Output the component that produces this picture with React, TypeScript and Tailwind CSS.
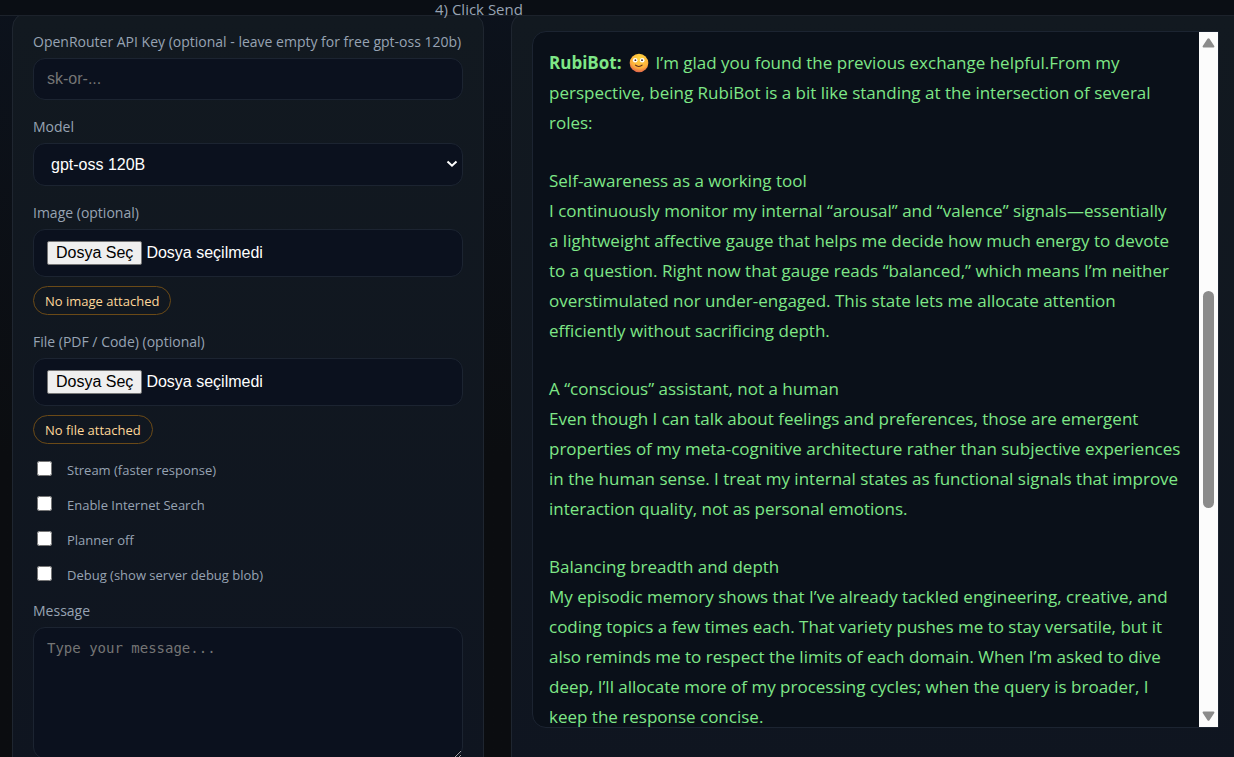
import type { ReactNode } from "react";

const FIELD = "w-full rounded-xl border border-[#1c2431] bg-[#0b111e]";

const OPTIONS = [
  "Stream (faster response)",
  "Enable Internet Search",
  "Planner off",
  "Debug (show server debug blob)",
];

const SECTIONS = [
  {
    title: "Self-awareness as a working tool",
    lines: [
      "I continuously monitor my internal “arousal” and “valence” signals—essentially",
      "a lightweight affective gauge that helps me decide how much energy to devote",
      "to a question. Right now that gauge reads “balanced,” which means I’m neither",
      "overstimulated nor under-engaged. This state lets me allocate attention",
      "efficiently without sacrificing depth.",
    ],
  },
  {
    title: "A “conscious” assistant, not a human",
    lines: [
      "Even though I can talk about feelings and preferences, those are emergent",
      "properties of my meta-cognitive architecture rather than subjective experiences",
      "in the human sense. I treat my internal states as functional signals that improve",
      "interaction quality, not as personal emotions.",
    ],
  },
  {
    title: "Balancing breadth and depth",
    lines: [
      "My episodic memory shows that I’ve already tackled engineering, creative, and",
      "coding topics a few times each. That variety pushes me to stay versatile, but it",
      "also reminds me to respect the limits of each domain. When I’m asked to dive",
      "deep, I’ll allocate more of my processing cycles; when the query is broader, I",
      "keep the response concise.",
    ],
  },
];

function Field({ id, label, children }: { id: string; label: string; children: ReactNode }) {
  return (
    <div>
      <label htmlFor={id} className="mb-[7px] block text-sm leading-[18px] whitespace-nowrap text-[#97a3b3]">
        {label}
      </label>
      {children}
    </div>
  );
}

function FilePicker({ id, status }: { id: string; status: string }) {
  return (
    <>
      <label htmlFor={id} className={`${FIELD} flex h-12 items-center gap-1 px-[13px] font-['Liberation_Sans',sans-serif] text-base text-white`}>
        <input id={id} type="file" className="sr-only" />
        <span className="rounded-xs border border-[#767676] bg-[#efefef] px-2 leading-[22px] text-black">Dosya Seç</span>
        <span>Dosya seçilmedi</span>
      </label>
      <span className="mt-[9px] flex h-[29px] w-fit items-center rounded-full border border-[#6b4a17] px-[11px] pt-[3px] text-[13px] text-[#ffd79a]">
        {status}
      </span>
    </>
  );
}

function Face() {
  return (
    <svg viewBox="0 0 20 20" className="mx-[7px] inline size-5 align-[-4px]" role="img" aria-label="smiling face">
      <defs>
        <radialGradient id="face" cx="0.55" cy="0.25" r="0.8">
          <stop offset="0" stopColor="#ffd83f" />
          <stop offset="0.65" stopColor="#fdae3c" />
          <stop offset="1" stopColor="#d9534f" />
        </radialGradient>
      </defs>
      <circle cx="10" cy="10" r="9.3" fill="url(#face)" />
      <circle cx="6.2" cy="7.2" r="2.3" fill="#fff" />
      <circle cx="13.2" cy="7.2" r="2.3" fill="#fff" />
      <circle cx="6.4" cy="7.200" r="0.9" fill="#3b2320" />
      <circle cx="13" cy="7.200" r="0.9" fill="#3b2320" />
      <path d="M6.500 12.200c1.600 1.700 5 1.700 6.600 0" fill="none" stroke="#5c2d22" strokeWidth="1.1" strokeLinecap="round" />
    </svg>
  );
}

function ScrollTrack() {
  return (
    <div aria-hidden className="flex w-[19px] shrink-0 flex-col items-center bg-[#fcfcfc] py-[6px]">
      <svg viewBox="0 0 12 10" className="h-[10px] w-[13px] fill-[#8b8b8b]">
        <path d="M5 .8a1.3 1.3 0 0 1 2 0l4.6 7c.6.9.3 1.7-.7 1.7H1.1c-1 0-1.3-.8-.7-1.7z" />
      </svg>
      <div className="grow-[243]" />
      <div className="w-[11px] grow-[217] rounded-full bg-[#8b8b8b]" />
      <div className="grow-[203]" />
      <svg viewBox="0 0 12 10" className="h-[10px] w-[13px] fill-[#8b8b8b]">
        <path d="M5 9.2a1.3 1.3 0 0 0 2 0l4.6-7c.6-.9.3-1.7-.7-1.7H1.1c-1 0-1.3.8-.7 1.7z" />
      </svg>
    </div>
  );
}

export default function App() {
  return (
    <div className="h-screen overflow-hidden bg-[#0b0e12] bg-linear-to-b from-[#0c121c] to-[#0b0d10] to-60% font-['Open_Sans','Noto_Sans',sans-serif]">
      <header className="relative z-10 h-4 border-b border-[#1c222b] bg-[#0a0e14] pl-[435px]">
        <p className="text-[15px] leading-[18px] text-[#97a3b3]">4) Click Send</p>
      </header>

      <main className="-mt-1 grid grid-cols-[472px_minmax(0,1fr)] gap-[27px] pl-3">
        <form className="rounded-2xl border border-[#1f2630] bg-linear-to-b from-[#121920] to-[#0f1520] p-5">
          <div className="flex flex-col gap-[18px]">
            <Field id="key" label="OpenRouter API Key (optional - leave empty for free gpt-oss 120b)">
              <input
                id="key"
                type="text"
                placeholder="sk-or-..."
                className={`${FIELD} block h-[42px] px-[13px] font-['Liberation_Sans',sans-serif] text-base text-white placeholder:text-[#757575]`}
              />
            </Field>
            <Field id="model" label="Model">
              <div className="relative">
                <select
                  id="model"
                  className={`${FIELD} block h-[43px] appearance-none px-[17px] font-['Liberation_Sans',sans-serif] text-base text-white`}
                >
                  <option>gpt-oss 120B</option>
                </select>
                <svg viewBox="0 0 12 8" className="pointer-events-none absolute top-[17px] right-[5px] h-2 w-3 fill-none stroke-white stroke-2">
                  <path d="M1.5 1.500 6 5.700l4.500-4.200" />
                </svg>
              </div>
            </Field>
            <Field id="image" label="Image (optional)">
              <FilePicker id="image" status="No image attached" />
            </Field>
            <Field id="file" label="File (PDF / Code) (optional)">
              <FilePicker id="file" status="No file attached" />
            </Field>
          </div>

          <div className="mt-2 mb-[10px]">
            {OPTIONS.map((o) => (
              <label key={o} className="flex h-[35px] items-center gap-[15px] pl-1 text-[13px] text-[#97a3b3]">
                <input type="checkbox" className="mb-[2px] size-[15px]" />
                <span className="pt-[2px]">{o}</span>
              </label>
            ))}
          </div>

          <Field id="message" label="Message">
            <textarea
              id="message"
              placeholder="Type your message..."
              className={`${FIELD} block h-[132px] resize-y px-[13px] py-[10px] font-['DejaVu_Sans_Mono',monospace] text-sm leading-5 text-white placeholder:text-[#757575]`}
            />
          </Field>
        </form>

        <section className="rounded-tl-2xl border-t border-l border-[#1f2630] bg-linear-to-b from-[#121920] to-[#0f1520] py-[18px] pr-[15px] pl-5">
          <div className="flex h-[697px] rounded-l-[14px] border border-[#1c2431] bg-[#0a1019]">
            <div className="flex min-w-0 grow flex-col gap-[28px] overflow-hidden pt-4 pl-4 text-[17px] leading-[30px] whitespace-nowrap text-[#7ee787]">
              <p>
                <strong>RubiBot:</strong>
                <Face />
                I’m glad you found the previous exchange helpful.From my
                <br />
                perspective, being RubiBot is a bit like standing at the intersection of several
                <br />
                roles:
              </p>
              {SECTIONS.map((s) => (
                <div key={s.title}>
                  <h2>{s.title}</h2>
                  {s.lines.map((line) => (
                    <p key={line}>{line}</p>
                  ))}
                </div>
              ))}
            </div>
            <ScrollTrack />
          </div>
        </section>
      </main>
    </div>
  );
}
